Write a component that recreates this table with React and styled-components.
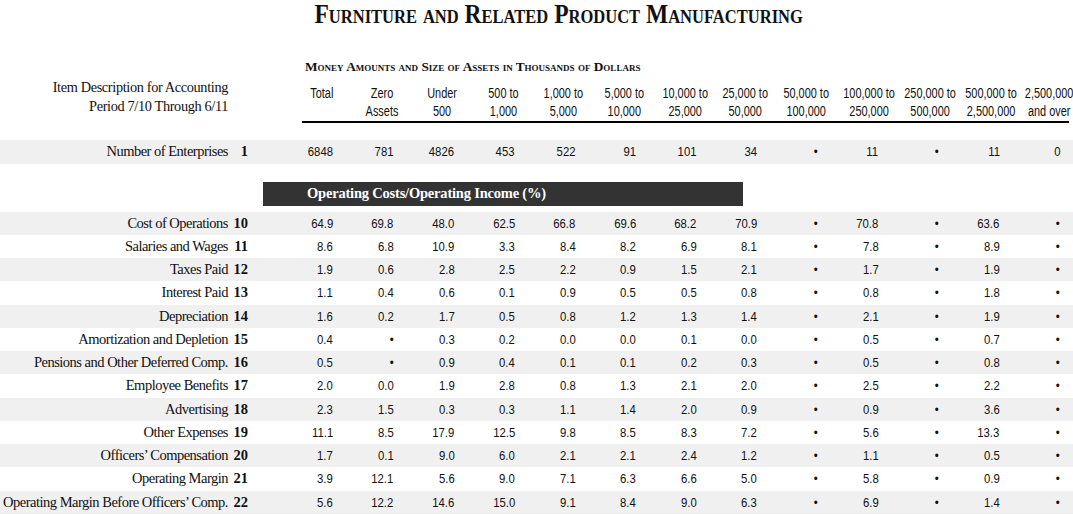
import React from 'react';
import styled, { createGlobalStyle } from 'styled-components';

const GlobalStyle = createGlobalStyle`
  html, body {
    margin: 0;
    padding: 0;
    background: #ffffff;
    overflow: hidden;
  }
  body {
    font-family: "Liberation Serif", serif;
    color: #111111;
  }
`;

const COLS = '291px repeat(13, 60.6px)';

const Page = styled.div`
  width: 1073px;
  height: 515px;
  overflow: hidden;
`;

const TitleBar = styled.div`
  height: 40px;
  padding-left: 44px;
  display: flex;
  justify-content: center;
`;

const Title = styled.h1`
  margin: 0;
  font-family: "Liberation Serif", serif;
  font-weight: 700;
  font-size: 27px;
  line-height: 28px;
  font-variant: small-caps;
  white-space: nowrap;
  transform: scaleX(0.87);
`;

const HeaderGrid = styled.div`
  display: grid;
  grid-template-columns: ${COLS};
  margin-top: 20px;
`;

const MoneyLine = styled.div`
  grid-column: 2 / -1;
  grid-row: 1;
  padding-left: 14px;
  font-family: "Liberation Serif", serif;
  font-weight: 700;
  font-size: 13.3px;
  line-height: 14px;
  font-variant: small-caps;
  white-space: nowrap;
  margin-bottom: 10px;
`;

const ItemHeader = styled.div`
  grid-column: 1;
  grid-row: 1 / 3;
  align-self: end;
  padding: 0 63px 5px 0;
  text-align: right;
  font-size: 14.3px;
  line-height: 19px;
  letter-spacing: -0.35px;
`;

const ColHead = styled.div`
  grid-row: 2;
  text-align: center;
  font-family: "Liberation Sans", sans-serif;
  font-size: 14px;
  line-height: 18px;
  white-space: nowrap;
  padding-bottom: 1px;
`;

const Narrow = styled.span`
  display: inline-block;
  transform: scaleX(${p => p.$scale || 0.8});
  transform-origin: ${p => p.$origin || 'center'} center;
`;

const Rule = styled.div`
  grid-column: 2 / -1;
  grid-row: 3;
  height: 1.5px;
  background: #000;
  margin: 0 10px 0 11px;
`;

const Row = styled.div`
  display: grid;
  grid-template-columns: ${COLS};
  align-items: center;
  height: ${p => p.$h}px;
  background: ${p => (p.$shade ? '#f0f0f0' : '#ffffff')};
`;

const LabelCell = styled.div`
  display: flex;
  justify-content: flex-end;
  align-items: baseline;
  padding-right: 43px;
  white-space: nowrap;
`;

const LabelText = styled.span`
  font-size: 14.5px;
  letter-spacing: -0.5px;
`;

const LineNo = styled.span`
  min-width: 20px;
  text-align: right;
  font-size: 14.5px;
  font-weight: 700;
`;

const Cell = styled.div`
  text-align: right;
  padding-right: 18.5px;
  font-family: "Liberation Sans", sans-serif;
  font-size: 13.5px;
  white-space: nowrap;
`;

const SectionBar = styled.div`
  margin: 18px 0 6px 263px;
  width: 480px;
  height: 24px;
  background: #333333;
  color: #ffffff;
  display: flex;
  align-items: center;
  padding-left: 44px;
  box-sizing: border-box;
  font-weight: 700;
  font-size: 14.5px;
  letter-spacing: -0.2px;
`;

const Spacer = styled.div`
  height: ${p => p.$h}px;
`;

const headers = [
  ['Total', '\u00a0'],
  ['Zero', 'Assets'],
  ['Under', '500'],
  ['500 to', '1,000'],
  ['1,000 to', '5,000'],
  ['5,000 to', '10,000'],
  ['10,000 to', '25,000'],
  ['25,000 to', '50,000'],
  ['50,000 to', '100,000'],
  ['100,000 to', '250,000'],
  ['250,000 to', '500,000'],
  ['500,000 to', '2,500,000'],
  ['2,500,000', 'and over'],
];

const B = '•';

const rows = [
  ['Cost of Operations', 10, ['64.9', '69.8', '48.0', '62.5', '66.8', '69.6', '68.2', '70.9', B, '70.8', B, '63.6', B]],
  ['Salaries and Wages', 11, ['8.6', '6.8', '10.9', '3.3', '8.4', '8.2', '6.9', '8.1', B, '7.8', B, '8.9', B]],
  ['Taxes Paid', 12, ['1.9', '0.6', '2.8', '2.5', '2.2', '0.9', '1.5', '2.1', B, '1.7', B, '1.9', B]],
  ['Interest Paid', 13, ['1.1', '0.4', '0.6', '0.1', '0.9', '0.5', '0.5', '0.8', B, '0.8', B, '1.8', B]],
  ['Depreciation', 14, ['1.6', '0.2', '1.7', '0.5', '0.8', '1.2', '1.3', '1.4', B, '2.1', B, '1.9', B]],
  ['Amortization and Depletion', 15, ['0.4', B, '0.3', '0.2', '0.0', '0.0', '0.1', '0.0', B, '0.5', B, '0.7', B]],
  ['Pensions and Other Deferred Comp.', 16, ['0.5', B, '0.9', '0.4', '0.1', '0.1', '0.2', '0.3', B, '0.5', B, '0.8', B]],
  ['Employee Benefits', 17, ['2.0', '0.0', '1.9', '2.8', '0.8', '1.3', '2.1', '2.0', B, '2.5', B, '2.2', B]],
  ['Advertising', 18, ['2.3', '1.5', '0.3', '0.3', '1.1', '1.4', '2.0', '0.9', B, '0.9', B, '3.6', B]],
  ['Other Expenses', 19, ['11.1', '8.5', '17.9', '12.5', '9.8', '8.5', '8.3', '7.2', B, '5.6', B, '13.3', B]],
  ['Officers\u2019 Compensation', 20, ['1.7', '0.1', '9.0', '6.0', '2.1', '2.1', '2.4', '1.2', B, '1.1', B, '0.5', B]],
  ['Operating Margin', 21, ['3.9', '12.1', '5.6', '9.0', '7.1', '6.3', '6.6', '5.0', B, '5.8', B, '0.9', B]],
  ['Operating Margin Before Officers\u2019 Comp.', 22, ['5.6', '12.2', '14.6', '15.0', '9.1', '8.4', '9.0', '6.3', B, '6.9', B, '1.4', B]],
];

const enterprises = ['6848', '781', '4826', '453', '522', '91', '101', '34', B, '11', B, '11', '0'];

const DataRow = ({ label, no, values, shade, h }) => (
  <Row $shade={shade} $h={h}>
    <LabelCell>
      <LabelText>{label}</LabelText>
      <LineNo>{no}</LineNo>
    </LabelCell>
    {values.map((v, i) => (
      <Cell key={i}>
        <Narrow $scale={0.84} $origin="right">{v}</Narrow>
      </Cell>
    ))}
  </Row>
);

const App = () => (
  <Page>
    <GlobalStyle />
    <TitleBar>
      <Title>Furniture and Related Product Manufacturing</Title>
    </TitleBar>

    <HeaderGrid>
      <MoneyLine>Money Amounts and Size of Assets in Thousands of Dollars</MoneyLine>
      <ItemHeader>
        Item Description for Accounting
        <br />
        Period 7/10 Through 6/11
      </ItemHeader>
      {headers.map(([a, b], i) => (
        <ColHead key={i} style={{ gridColumn: i + 2 }}>
          <Narrow $scale={0.78}>
            {a}
            <br />
            {b}
          </Narrow>
        </ColHead>
      ))}
      <Rule />
    </HeaderGrid>

    <Spacer $h={17} />
    <DataRow label="Number of Enterprises" no={1} values={enterprises} shade h={24} />

    <SectionBar>Operating Costs/Operating Income (%)</SectionBar>

    {rows.map(([label, no, values], i) => (
      <DataRow key={no} label={label} no={no} values={values} shade={i % 2 === 0} h={23.25} />
    ))}
  </Page>
);

export default App;
